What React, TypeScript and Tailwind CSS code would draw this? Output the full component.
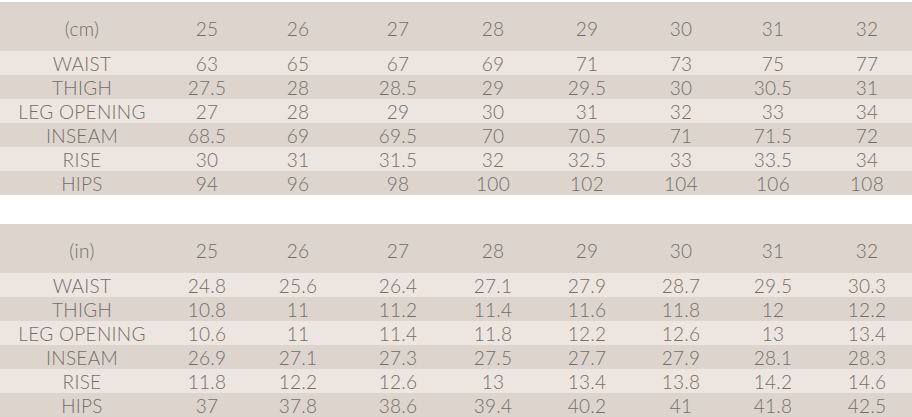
const sizes = ["25", "26", "27", "28", "29", "30", "31", "32"];

const cm: [string, string[]][] = [
  ["WAIST", ["63", "65", "67", "69", "71", "73", "75", "77"]],
  ["THIGH", ["27.5", "28", "28.5", "29", "29.5", "30", "30.5", "31"]],
  ["LEG OPENING", ["27", "28", "29", "30", "31", "32", "33", "34"]],
  ["INSEAM", ["68.5", "69", "69.5", "70", "70.5", "71", "71.5", "72"]],
  ["RISE", ["30", "31", "31.5", "32", "32.5", "33", "33.5", "34"]],
  ["HIPS", ["94", "96", "98", "100", "102", "104", "106", "108"]],
];

const inches: [string, string[]][] = [
  ["WAIST", ["24.8", "25.6", "26.4", "27.1", "27.9", "28.7", "29.5", "30.3"]],
  ["THIGH", ["10.8", "11", "11.2", "11.4", "11.6", "11.8", "12", "12.2"]],
  ["LEG OPENING", ["10.6", "11", "11.4", "11.8", "12.2", "12.6", "13", "13.4"]],
  ["INSEAM", ["26.9", "27.1", "27.3", "27.5", "27.7", "27.9", "28.1", "28.3"]],
  ["RISE", ["11.8", "12.2", "12.6", "13", "13.4", "13.8", "14.2", "14.6"]],
  ["HIPS", ["37", "37.8", "38.6", "39.4", "40.2", "41", "41.8", "42.5"]],
];

// column widths follow the auto-sized table in the screenshot
const cols = "grid-cols-[164px_86px_96px_104px_86px_102px_86px_98px_90px]";

function SizeTable({ unit, rows }: { unit: string; rows: [string, string[]][] }) {
  return (
    <div className="w-full">
      <div className={`grid h-[49px] ${cols} items-center bg-[#ddd5cd] pt-[4px]`}>
        <div className="text-center">{unit}</div>
        {sizes.map((s) => (
          <div key={s} className="text-center">
            {s}
          </div>
        ))}
      </div>
      {rows.map(([label, values], i) => (
        <div
          key={label}
          className={`grid h-[24px] ${cols} items-center pt-[1px] ${i % 2 === 0 ? "bg-[#ede6e0]" : "bg-[#ddd5cd]"}`}
        >
          <div className="text-center">{label}</div>
          {values.map((v, j) => (
            <div key={j} className="text-center">
              {v}
            </div>
          ))}
        </div>
      ))}
    </div>
  );
}

export default function App() {
  return (
    <div className="flex w-[912px] flex-col gap-[29px] bg-white pt-[2px] font-['Lato',sans-serif] text-[19px] font-light leading-none tracking-[0.3px] text-[#736d69]">
      <SizeTable unit="(cm)" rows={cm} />
      <SizeTable unit="(in)" rows={inches} />
    </div>
  );
}
